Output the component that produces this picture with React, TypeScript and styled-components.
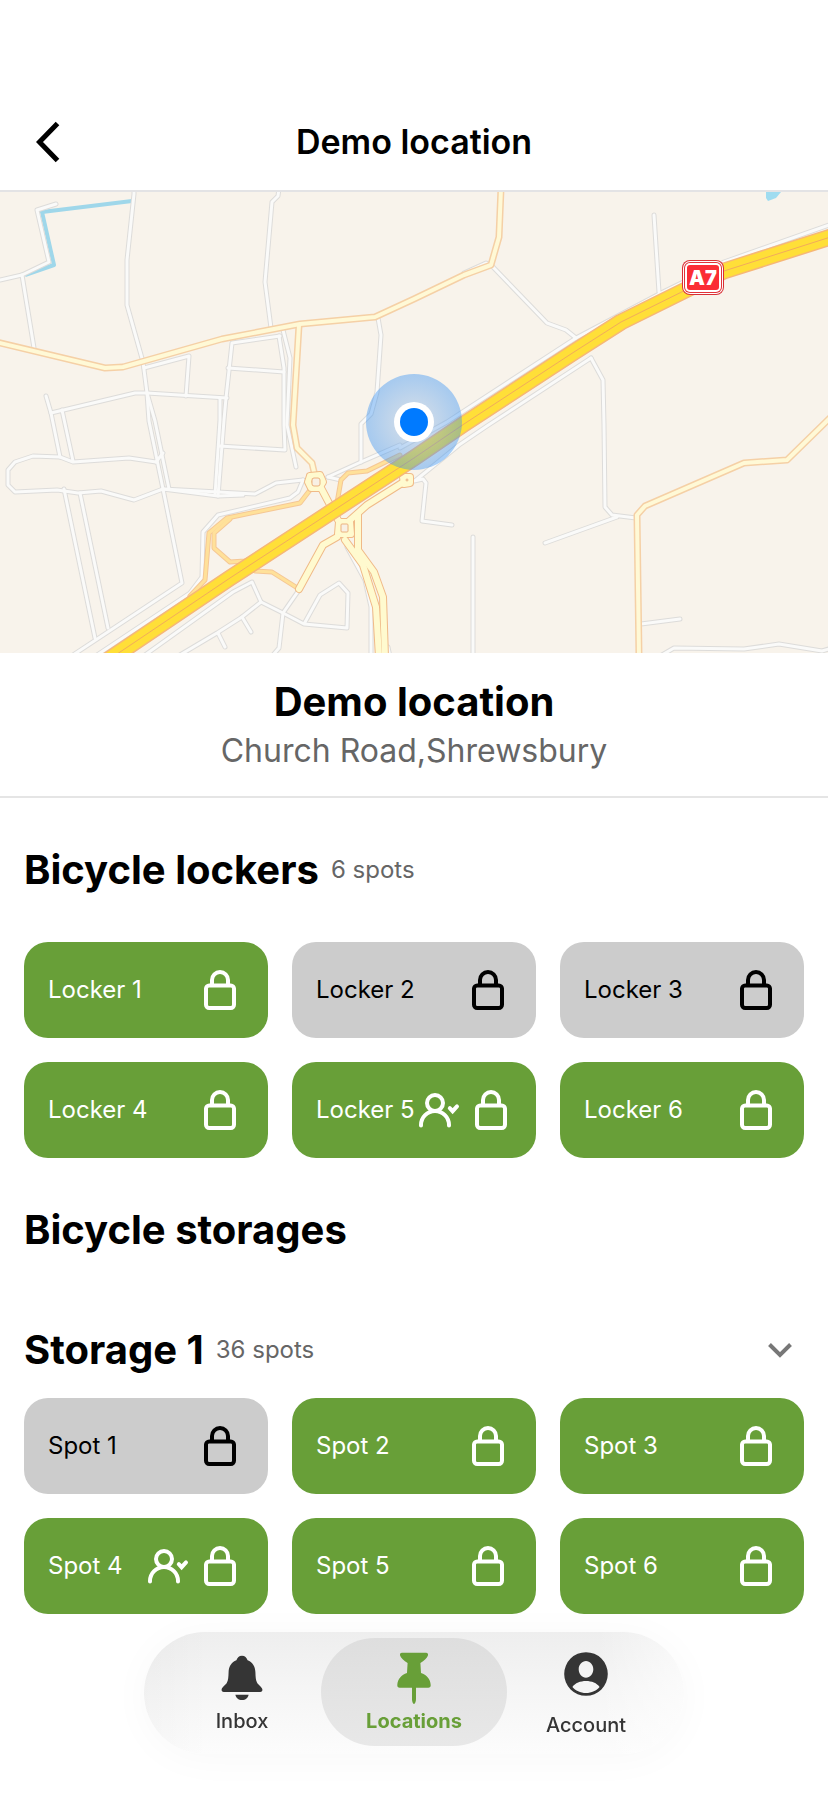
import React, { useState } from 'react'
import styled, { createGlobalStyle, css } from 'styled-components'

type Spot = {
  id: number
  name: string
  taken?: boolean
  mine?: boolean
}

const lockers: Spot[] = [
  { id: 1, name: 'Locker 1' },
  { id: 2, name: 'Locker 2', taken: true },
  { id: 3, name: 'Locker 3', taken: true },
  { id: 4, name: 'Locker 4' },
  { id: 5, name: 'Locker 5', mine: true },
  { id: 6, name: 'Locker 6' },
]

const storageSpots: Spot[] = [
  { id: 1, name: 'Spot 1', taken: true },
  { id: 2, name: 'Spot 2' },
  { id: 3, name: 'Spot 3' },
  { id: 4, name: 'Spot 4', mine: true },
  { id: 5, name: 'Spot 5' },
  { id: 6, name: 'Spot 6' },
]

const streets = [
  '0,88 22,83 49,70 37,18 56,12',
  '22,83 34,156',
  '134,-4 134,2 127,68 127,113 143,170 147,201 149,229 163,297 182,391 73,463',
  '147,201 155,229 169,297',
  '163,261 156,270',
  '279,-4 278,4 272,10 265,90 271,136',
  '144,176 189,164 186,204',
  '46,204 51,221 135,201 147,201 227,206',
  '51,221 60,265',
  '62,218 73,269',
  '280,144 232,151 226,206 224,228 218,304',
  '220,206 220,228 215,303',
  '228,176 284,180',
  '279,144 284,176 284,233 285,258 219,254',
  '283,138 290,166 287,233 296,275',
  '378,126 381,143 377,200 371,222 361,232 361,270',
  '156,270 129,266 73,270 60,265 33,264 15,270 8,278 8,293 15,300 57,298 78,301 101,299 134,308 163,297 218,300 255,302 276,291 303,288',
  '163,297 218,304 243,303',
  '64,297 95,446',
  '80,301 108,436',
  '303,288 298,300 290,306 218,323 203,340 202,385 190,401 97,463',
  '145,463 233,400 252,390 261,410 283,421 304,432 347,436 348,401 339,391 320,403 304,432',
  '180,463 217,441 242,425 261,410',
  '242,425 251,440',
  '218,441 225,455',
  '299,398 283,421 279,456 273,463',
  '328,285 361,270 400,253',
  '328,285 341,288',
  '347,355 365,388 371,415 371,465',
  '388,455 390,465',
  '464,81 486,71 492,74 547,131 566,138 576,146',
  '654,23 659,100',
  '832,32 724,70 661,101 576,146 447,230 400,256',
  '591,166 487,234 459,253 416,288',
  '591,166 603,188 604,233 605,315 612,323 636,326',
  '617,325 545,351',
  '414,289 423,287 426,291 422,329 452,333',
  '473,345 473,465',
  '641,432 680,427',
  '662,463 674,456 744,457 779,452 822,459 832,456',
]

const mainRoads = [
  '-4,150 105,176 123,175 222,147 300,132 375,125 414,107 464,83 491,73 499,45 501,-4',
  '299,133 293,233 297,256 312,271 315,284',
  '639,465 637,323 645,314 744,271 787,268 832,224',
]

const ramps = [
  '190,404 205,388 209,341 227,326 300,311 310,298',
  '262,362 245,369 230,370 214,356 214,341 230,327',
  '255,379 272,380 299,397',
  '337,311 341,288 348,281 367,279 400,263',
]

const links = [
  '320,294 338,328',
  '349,329 367,313 402,291',
  '337,345 323,353 299,397',
  '345,348 363,373 376,415 379,465',
  '358,322 358,358 374,380 383,405 385,465',
  '310,284 320,283 323,290 319,296 311,296 308,290 310,284',
  '339,330 350,330 351,342 338,342 339,330',
  '403,285 410,285 410,291 404,292 403,285',
]

const motorway = '840,42 724,79 621,130 574,160 464,232 414,266 230,386 80,487'

type RoadsProps = {
  lines: string[]
  casing: string
  fill: string
  outer: number
  inner: number
}

// all casings go under all fills so crossings stay open
const Roads = ({ lines, casing, fill, outer, inner }: RoadsProps) => (
  <g fill="none" strokeLinejoin="round" strokeLinecap="round">
    {lines.map((points) => (
      <polyline key={points} points={points} stroke={casing} strokeWidth={outer} />
    ))}
    {lines.map((points) => (
      <polyline key={points} points={points} stroke={fill} strokeWidth={inner} />
    ))}
  </g>
)

const LocationMap = () => (
  <StyledMap viewBox="0 0 828 461" preserveAspectRatio="xMidYMid slice" role="img" aria-label="Map of Demo location">
    <defs>
      <radialGradient id="halo">
        <stop offset="0.4" stopColor="#7aaeea" stopOpacity="0.4" />
        <stop offset="1" stopColor="#2b8cf5" stopOpacity="0.4" />
      </radialGradient>
    </defs>
    <rect width="828" height="461" fill="#f8f3eb" />
    <g fill="none" stroke="#9fd7ea" strokeWidth="4" strokeLinejoin="round">
      <polyline points="132,9 42,20 54,73 25,83" />
      <path d="M766 0v6l2 3 8-3 5-6z" fill="#9fdcf0" stroke="none" />
    </g>
    <Roads lines={streets} casing="#dddcda" fill="#fafaf9" outer={5} inner={3} />
    <Roads lines={mainRoads} casing="#f5d0a6" fill="#fff9d6" outer={7} inner={4} />
    <Roads lines={ramps} casing="#f5c795" fill="#ffe19a" outer={5} inner={3} />
    <Roads lines={links} casing="#f0ba88" fill="#fffacf" outer={8} inner={6} />
    <g fill="#f8f0e4" stroke="#ecb27e" strokeWidth="1">
      <rect x="312" y="286" width="8" height="8" rx="2" />
      <rect x="341" y="332" width="7" height="8" rx="1" />
      <circle cx="407" cy="288" r="1" />
    </g>
    <Roads lines={[motorway]} casing="#f6b777" fill="#ffdf38" outer={17} inner={14} />
    <polyline points={motorway} fill="none" stroke="#f2ab5c" strokeWidth="1" />
    <rect x="682" y="68" width="42" height="35" rx="8" fill="#d92f35" />
    <rect x="683" y="69" width="40" height="33" rx="7" fill="#fff" />
    <rect x="684" y="70" width="38" height="31" rx="6" fill="#e23238" />
    <rect x="685" y="71" width="36" height="29" rx="5" fill="#fff" />
    <rect x="687" y="73" width="32" height="25" rx="3" fill="#fb2d35" />
    <MapLabel x="703" y="93" textAnchor="middle">A7</MapLabel>
    <circle cx="414" cy="230" r="48" fill="url(#halo)" />
    <circle cx="414" cy="230" r="20" fill="#fff" />
    <circle cx="414" cy="230" r="14" fill="#007aff" />
  </StyledMap>
)

const LockIcon = () => (
  <SpotIcon viewBox="0 0 24 24" aria-hidden="true">
    <rect x="5" y="9.7" width="14" height="11.3" rx="1.6" />
    <path d="M8 9.7V7a4 4 0 0 1 8 0v2.7" />
  </SpotIcon>
)

const UserCheckIcon = () => (
  <SpotIcon viewBox="0 0 24 24" strokeLinecap="round" aria-hidden="true">
    <circle cx="10" cy="8.5" r="4" />
    <path d="M3 19.7v-.2a7 7 0 0 1 14 0v.2" />
    <path d="M17.4 11.1l1.4 1.5 2.2-2.4" />
  </SpotIcon>
)

const BellIcon = () => (
  <svg width="48" height="56" viewBox="0 0 48 56" fill="currentColor" aria-hidden="true">
    <path d="M24 5.7c-3 0-4.6 1.8-5.6 4.6C13.6 12 10.8 16.4 10.6 22c-.2 5-.3 8-1.6 10.6C7.8 35 4 37 3.6 39.6c-.2 1.5.7 2.4 2.2 2.4h36.4c1.5 0 2.4-.9 2.2-2.4C44 37 40.2 35 39 32.6 37.7 30 37.6 27 37.4 22c-.2-5.6-3-10-7.8-11.7C28.6 7.5 27 5.7 24 5.7z" />
    <path d="M17.4 44.7h13.2c-.4 3-3 5.3-6.6 5.3s-6.2-2.3-6.6-5.3z" />
  </svg>
)

const PinIcon = () => (
  <svg width="48" height="56" viewBox="0 0 48 56" fill="currentColor" aria-hidden="true">
    <path d="M12 2.7h24c1.6 0 2.3 1 2 2.6-.6 2.8-4 5.4-7.6 7.6L31 23c5.6 2 9.4 5.8 9.7 12 .1 1.8-.8 2.7-2.4 2.7H26V49c0 2-.9 5-2 5s-2-3-2-5V37.7H9.7c-1.6 0-2.5-.9-2.4-2.7.3-6.2 4.1-10 9.7-12l.6-10.1C14 10.7 10.6 8.1 10 5.3c-.3-1.6.4-2.6 2-2.6z" />
  </svg>
)

const AccountIcon = () => (
  <svg width="48" height="60" viewBox="0 0 48 60" fill="currentColor" fillRule="evenodd" aria-hidden="true">
    <path d="M24 2.2a21.8 21.8 0 1 0 0 43.6 21.8 21.8 0 0 0 0-43.6zM24 11c4 0 7.3 3.7 7.3 8.3S28 27.7 24 27.7s-7.3-3.8-7.3-8.4S20 11 24 11zM10.4 37C13 33 18.5 31 24 31s11 2 13.6 6c-3 3.6-8 6-13.6 6s-10.6-2.4-13.6-6z" />
  </svg>
)

const tabs = [
  { id: 'inbox', title: 'Inbox', icon: <BellIcon /> },
  { id: 'locations', title: 'Locations', icon: <PinIcon /> },
  { id: 'account', title: 'Account', icon: <AccountIcon /> },
]

const SpotGrid = ({ spots }: { spots: Spot[] }) => (
  <StyledGrid>
    {spots.map((spot) => (
      <SpotButton key={spot.id} type="button" $taken={spot.taken}>
        <SpotName>{spot.name}</SpotName>
        <SpotIcons>
          {spot.mine && <UserCheckIcon />}
          <LockIcon />
        </SpotIcons>
      </SpotButton>
    ))}
  </StyledGrid>
)

const App = () => {
  const [open, setOpen] = useState(true)
  const [tab, setTab] = useState('locations')

  return (
    <>
      <GlobalStyle />
      <Header>
        <BackButton type="button" aria-label="Back">
          <svg width="48" height="48" viewBox="0 0 48 48" fill="none" stroke="currentColor" strokeWidth="5" aria-hidden="true">
            <path d="M33.5 5.5L15.5 24l18 18.5" />
          </svg>
        </BackButton>
        <HeaderTitle>Demo location</HeaderTitle>
      </Header>
      <LocationMap />
      <LocationInfo>
        <LocationName>Demo location</LocationName>
        <Address>Church Road,Shrewsbury</Address>
      </LocationInfo>
      <Main>
        <SectionHead>
          <SectionTitle>Bicycle lockers</SectionTitle>
          <SpotCount>6 spots</SpotCount>
        </SectionHead>
        <SpotGrid spots={lockers} />
        <SectionHead>
          <SectionTitle>Bicycle storages</SectionTitle>
        </SectionHead>
        <SectionHead $compact>
          <SectionTitle>Storage 1</SectionTitle>
          <SpotCount>36 spots</SpotCount>
          <ToggleButton type="button" aria-label="Toggle Storage 1" aria-expanded={open} onClick={() => setOpen(!open)}>
            <svg width="48" height="48" viewBox="0 0 48 48" fill="none" stroke="currentColor" strokeWidth="4" aria-hidden="true">
              <path d="M13.5 18.5L24 29l10.5-10.5" />
            </svg>
          </ToggleButton>
        </SectionHead>
        {open && <SpotGrid spots={storageSpots} />}
      </Main>
      <TabBar>
        <TabList>
          {tabs.map(({ id, title, icon }) => (
            <Tab key={id} type="button" $active={tab === id} onClick={() => setTab(id)}>
              {icon}
              {title}
            </Tab>
          ))}
        </TabList>
      </TabBar>
    </>
  )
}

export default App

const GlobalStyle = createGlobalStyle`
  * {
    box-sizing: border-box;
  }

  body {
    margin: 0;
    background: #fff;
    color: #000;
    font-family: Inter, "Liberation Sans", sans-serif;
  }

  h1, h2, p {
    margin: 0;
  }

  button {
    padding: 0;
    border: 0;
    background: none;
    font: inherit;
    color: inherit;
    cursor: pointer;
  }

  svg {
    display: block;
    flex-shrink: 0;
  }
`

const Header = styled.header`
  display: grid;
  grid-template-columns: 48px 1fr 48px;
  align-items: center;
  padding: 94px 24px 0;
  border-bottom: 2px solid #e3e3e5;
`

const BackButton = styled.button`
  width: 48px;
  height: 96px;
  display: flex;
  align-items: center;
`

const HeaderTitle = styled.h1`
  font-size: 34px;
  font-weight: 600;
  line-height: 48px;
  text-align: center;
`

const StyledMap = styled.svg`
  width: 100%;
  height: 461px;
`

const MapLabel = styled.text`
  fill: #fff;
  font-size: 20px;
  font-weight: 900;
`

const LocationInfo = styled.section`
  padding: 25px 24px 20px;
  border-bottom: 2px solid #e5e5e5;
  text-align: center;
`

const LocationName = styled.h2`
  font-size: 40px;
  font-weight: 700;
  line-height: 48px;
`

const Address = styled.p`
  font-size: 32px;
  line-height: 50px;
  color: #666;
`

const Main = styled.main`
  padding: 0 24px 192px;
`

const SectionHead = styled.div<{ $compact?: boolean }>`
  display: flex;
  align-items: center;
  gap: 12px;
  height: ${({ $compact }) => ($compact ? '96px' : '144px')};
`

const SectionTitle = styled.h2`
  font-size: 40px;
  font-weight: 700;
  line-height: 48px;
`

const SpotCount = styled.span`
  font-size: 24px;
  line-height: 32px;
  color: #666;
`

const ToggleButton = styled.button`
  margin-left: auto;
  color: #777;
`

const StyledGrid = styled.div`
  display: grid;
  grid-template-columns: repeat(3, minmax(0, 1fr));
  gap: 24px;
`

const SpotButton = styled.button<{ $taken?: boolean }>`
  display: flex;
  align-items: center;
  justify-content: space-between;
  height: 96px;
  padding: 0 24px;
  border-radius: 24px;
  background: ${({ $taken }) => ($taken ? '#ccc' : '#689f38')};
  color: ${({ $taken }) => ($taken ? '#000' : '#fff')};
`

const SpotName = styled.span`
  flex-shrink: 0;
  font-size: 24px;
  line-height: 32px;
  white-space: nowrap;
`

const SpotIcons = styled.span`
  display: flex;
  gap: 4px;
`

const SpotIcon = styled.svg`
  width: 48px;
  height: 48px;
  fill: none;
  stroke: currentColor;
  stroke-width: 2;
`

const TabBar = styled.nav`
  position: fixed;
  right: 0;
  bottom: 52px;
  left: 0;
  display: flex;
  justify-content: center;
`

const TabList = styled.div`
  display: flex;
  padding: 6px 12px 8px;
  border-radius: 61px;
  background:
    linear-gradient(90deg, rgba(0, 0, 0, 0.02), transparent 12%, transparent 84%, rgba(255, 255, 255, 0.6)),
    linear-gradient(#eee, #f5f5f5 45%, #fcfcfc);
  box-shadow: 0 4px 40px rgba(0, 0, 0, 0.03);
`

const Tab = styled.button<{ $active: boolean }>`
  display: flex;
  flex-direction: column;
  align-items: center;
  width: 186px;
  height: 108px;
  margin: 0 -7px;
  padding-top: 12px;
  border-radius: 54px;
  font-size: 20px;
  font-weight: 500;
  line-height: 30px;
  color: #353535;

  ${({ $active }) =>
    $active &&
    css`
      background: linear-gradient(#dedede, #e8e8e8);
      font-weight: 700;
      color: #689f38;
    `}
`
